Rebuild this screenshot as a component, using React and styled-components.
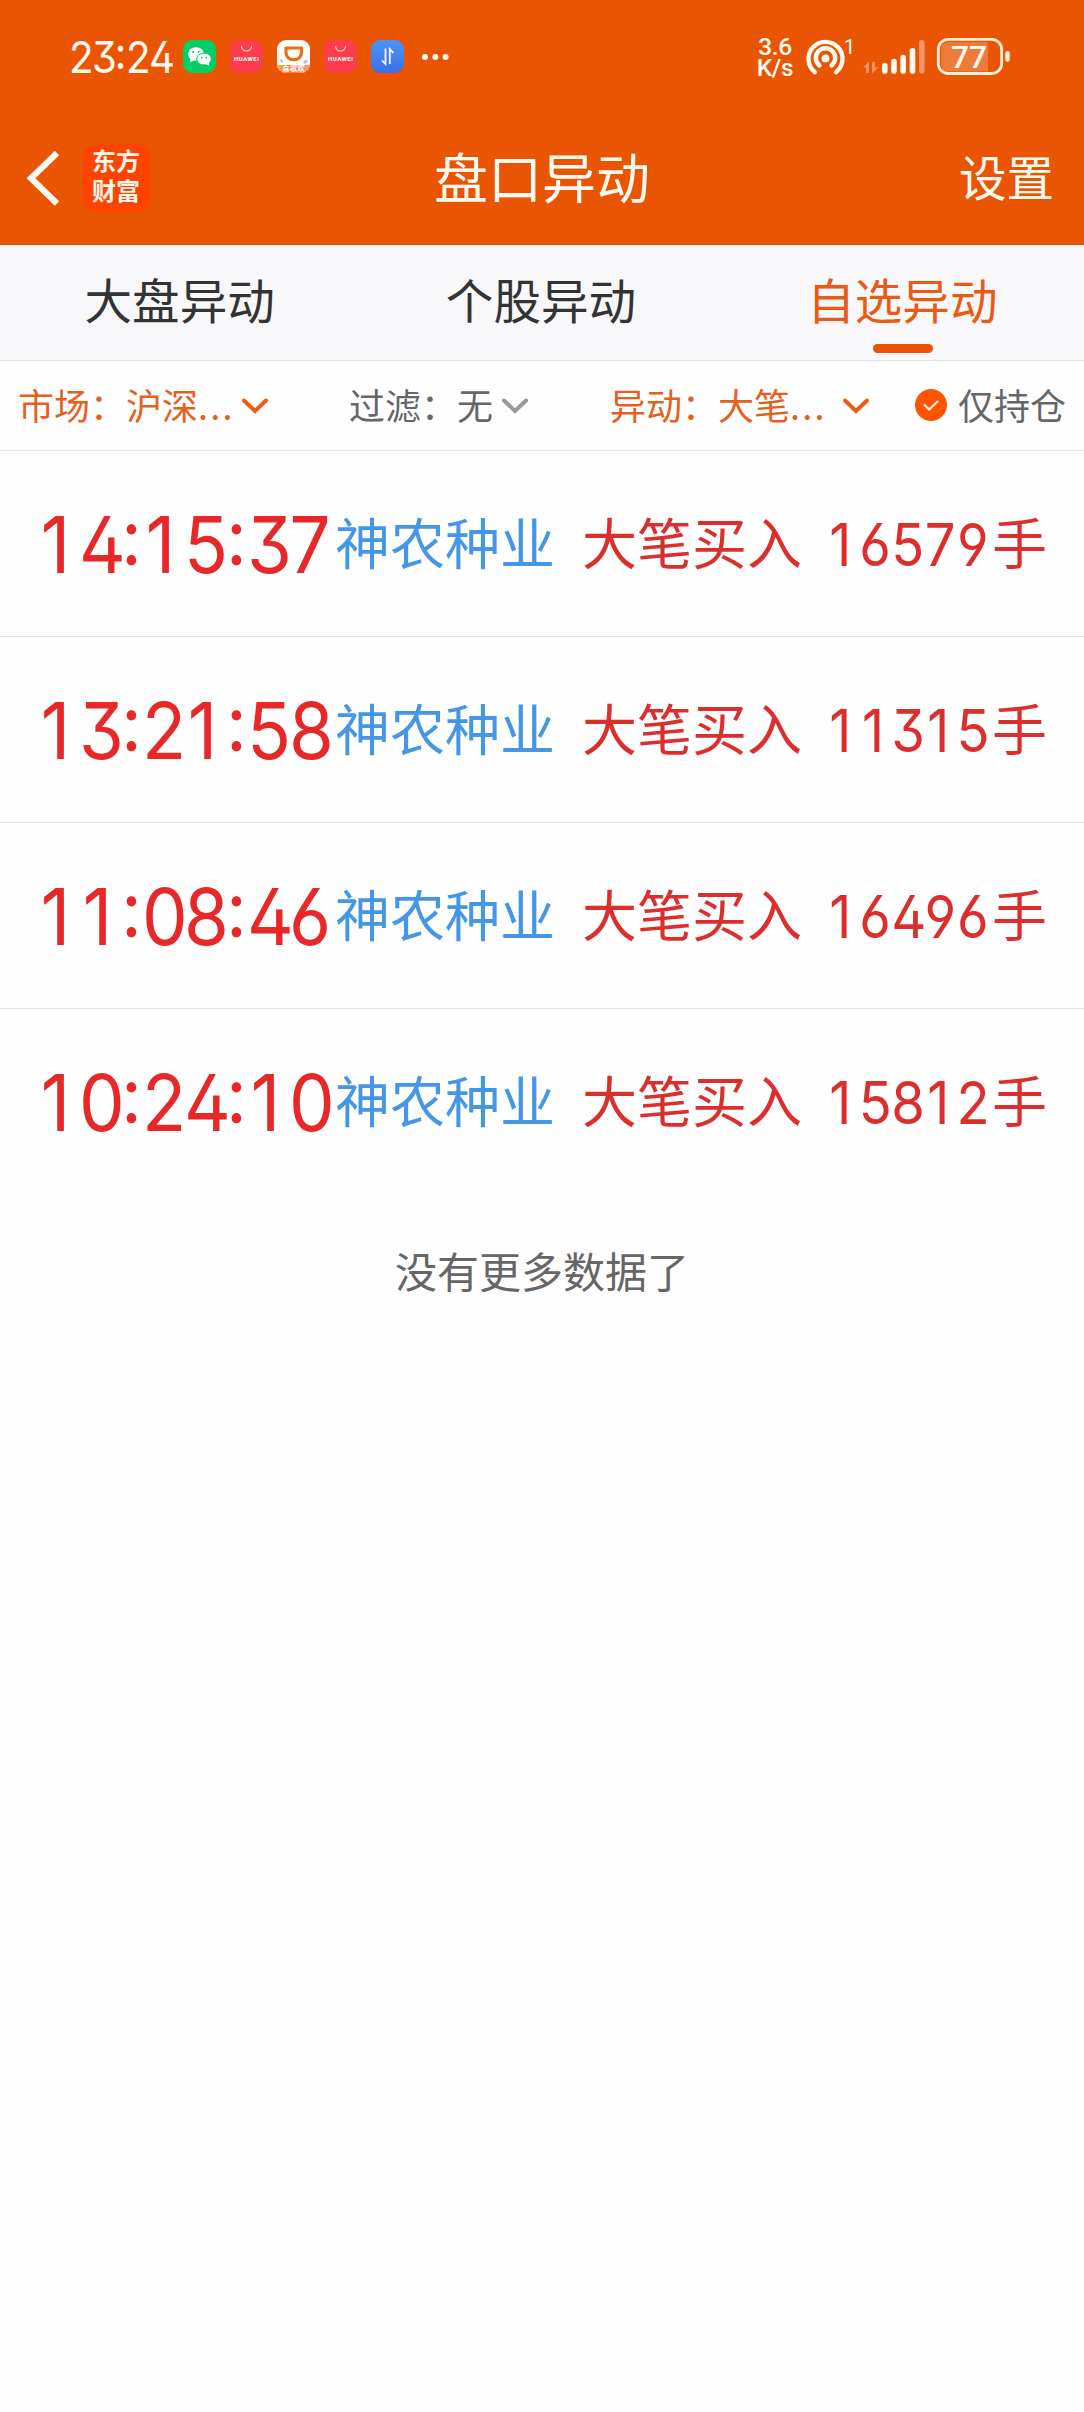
import React from "react";
import styled, { createGlobalStyle } from "styled-components";

const GlobalStyle = createGlobalStyle`
  * { box-sizing: border-box; }
  body {
    margin: 0;
    background: #fefefe;
    font-family: "Noto Sans CJK SC", sans-serif;
  }
`;

const latin = `Roboto, "Noto Sans CJK SC", sans-serif`;
const numeric = `Inter, Roboto, sans-serif`;

const Page = styled.main`
  width: 1084px;
  min-height: 2412px;
  display: flex;
  flex-direction: column;
  white-space: nowrap;
`;

const Header = styled.header`
  height: 245px;
  background: #ea5504;
  color: #fffaf0;
`;

const StatusBar = styled.div`
  height: 113px;
  padding: 0 74px 0 69px;
  display: flex;
  align-items: center;
  justify-content: space-between;
`;

const StatusGroup = styled.div`
  display: flex;
  align-items: center;
`;

const Digits = styled.span`
  display: block;
  transform: scaleX(0.93);
  transform-origin: 0 50%;
  font-family: ${numeric};
  font-feature-settings: "ss01", "case";
`;

const Cell = styled.span`
  display: inline-block;
  width: ${(p) => p.$width}em;
  padding-right: ${(p) => (p.$narrow ? 0.07 : 0)}em;
  text-align: center;
`;

const Clock = styled(Digits)`
  width: 114px;
  font-size: 43.5px;
  line-height: 60px;
`;

const AppIcons = styled.div`
  display: flex;
  gap: 14px;
  margin-right: 17px;
`;

const Speed = styled.div`
  width: 48px;
  margin-right: 4px;
  font: 500 24.5px/21px ${latin};
  text-align: center;
  letter-spacing: -0.4px;
`;

const NavBar = styled.nav`
  height: 132px;
  padding: 0 30px 5px 25px;
  display: grid;
  grid-template-columns: 1fr auto 1fr;
  align-items: center;
`;

const NavLeft = styled.div`
  display: flex;
  align-items: center;
  gap: 21px;
  padding-top: 2px;
`;

const BrandLogo = styled.div`
  width: 68px;
  height: 68px;
  border-radius: 14px;
  background: #ff4400;
  color: #fff6ec;
  display: flex;
  flex-direction: column;
  align-items: center;
  justify-content: center;
  font-size: 24px;
  font-weight: 700;
  line-height: 30px;
  padding: 0 2px 5px 0;
`;

const Title = styled.h1`
  margin: 0 0 0 5px;
  font-size: 54px;
  font-weight: 400;
  line-height: 74px;
  padding-bottom: 2px;
`;

const SettingsButton = styled.span`
  justify-self: end;
  font-size: 47.5px;
  line-height: 70px;
  padding-bottom: 2px;
`;

const Tabs = styled.div`
  height: 116px;
  display: grid;
  grid-template-columns: repeat(3, 1fr);
  background: #f8f8fa;
  border-bottom: 1px solid #dedee0;
`;

const Tab = styled.div`
  display: flex;
  flex-direction: column;
  align-items: center;
  padding: 18px 2px 0 0;
  font-size: 47.6px;
  line-height: 72px;
  color: ${(p) => (p.$active ? "#ea5a14" : "#333")};
`;

const Indicator = styled.i`
  width: 60px;
  height: 9px;
  margin: 9px 0 0 2px;
  border-radius: 5px;
  background: #ea5504;
`;

const Filters = styled.div`
  height: 90px;
  display: grid;
  grid-template-columns: 331px 261px 305px 1fr;
  padding-left: 18px;
  border-bottom: 1px solid #e4e4e4;
`;

const Filter = styled.div`
  display: flex;
  align-items: center;
  font-size: 36px;
  line-height: 50px;
  color: ${(p) => (p.$active ? "#e4601c" : "#666")};
  padding-bottom: 4px;
`;

const Dots = styled.span`
  letter-spacing: 2.2px;
  width: 40px;
`;

const ChevronBox = styled.span`
  display: flex;
  padding-top: 5px;
  margin-left: ${(p) => p.$gap}px;
`;

const CheckBox = styled.span`
  display: flex;
  padding-top: 3px;
  margin-right: 11px;
`;

const Row = styled.article`
  height: 186px;
  display: grid;
  grid-template-columns: 296px 247px 246px 1fr;
  align-items: center;
  padding: 0 0 8px 39px;
  border-bottom: 1px solid ${(p) => (p.$last ? "transparent" : "#e4e4e4")};
  color: #dc2e2d;
  font-size: 55px;
  line-height: 80px;
`;

const Time = styled(Digits)`
  margin: 10px 0 0 -2px;
  font-size: 78px;
  line-height: 80px;
  color: #e62828;
`;

const StockName = styled.span`
  color: #4497e6;
`;

const Volume = styled.span`
  display: flex;
  align-items: center;
`;

const Count = styled(Digits)`
  width: 166px;
  margin: 11px 0 0 -2px;
  font-size: 58.5px;
  line-height: 80px;
`;

const Footer = styled.p`
  margin: 45px 0 0;
  text-align: center;
  font-size: 42px;
  line-height: 60px;
  color: #666;
`;

const IconText = styled.text`
  font-family: Roboto, "Noto Sans CJK SC", sans-serif;
`;

function WeChatIcon() {
  return (
    <svg width="33" height="33" viewBox="0 0 33 33">
      <rect width="33" height="33" rx="9" fill="#05ce66" />
      <ellipse cx="13" cy="14" rx="8" ry="6.7" fill="#fff" />
      <path d="M7.5 18 L7 22.5 L11.5 20z" fill="#fff" />
      <ellipse cx="21" cy="19" rx="7.3" ry="6" fill="#fff" stroke="#05ce66" strokeWidth="1" />
      <path d="M22 24 L26 25.5 L25.7 22z" fill="#fff" />
      <g fill="#05ce66">
        <circle cx="10.3" cy="12" r="1.1" />
        <circle cx="15.6" cy="12" r="1.1" />
        <circle cx="18.7" cy="17.6" r="0.9" />
        <circle cx="23.2" cy="17.6" r="0.9" />
      </g>
    </svg>
  );
}

function HuaweiIcon() {
  return (
    <svg width="33" height="33" viewBox="0 0 33 33">
      <rect width="33" height="33" rx="9" fill="#fc3d4b" />
      <path d="M11.5 6 a5 5 0 0 0 10 0" fill="none" stroke="#ffe3e0" strokeWidth="1.1" />
      <IconText x="16.5" y="21" fontSize="6" fontWeight="700" textAnchor="middle" textLength="25" fill="#fff">
        HUAWEI
      </IconText>
    </svg>
  );
}

function CupIcon() {
  return (
    <svg width="33" height="33" viewBox="0 0 33 33">
      <defs>
        <clipPath id="cup-clip">
          <rect width="33" height="33" rx="9" />
        </clipPath>
        <linearGradient id="cup-ribbon">
          <stop offset="0" stopColor="#f6b04a" />
          <stop offset="0.4" stopColor="#f4743a" />
          <stop offset="1" stopColor="#f59a86" />
        </linearGradient>
      </defs>
      <g clipPath="url(#cup-clip)">
        <rect width="33" height="33" fill="#fffdf8" />
        <path d="M9 8h15.5v4.5a7.2 7.2 0 0 1-7.2 7.2h-1A7.2 7.2 0 0 1 9 12.5z" fill="none" stroke="#e8701c" strokeWidth="3.2" strokeLinejoin="round" />
        <path d="M0 25h33v8H0z" fill="url(#cup-ribbon)" />
        <path d="M26 22l3-2.5 2 1.5-3 3zM3 20l2-1 1 3-2 1z" fill="#c8b4ee" />
        <IconText x="16.5" y="31" fontSize="7.5" fontWeight="700" textAnchor="middle" fill="#fff">
          喜歌欢
        </IconText>
      </g>
    </svg>
  );
}

function TransferIcon() {
  return (
    <svg width="33" height="33" viewBox="0 0 33 33">
      <defs>
        <linearGradient id="transfer" x1="0" y1="0" x2="0" y2="1">
          <stop offset="0" stopColor="#4c94f5" />
          <stop offset="1" stopColor="#3a70e8" />
        </linearGradient>
      </defs>
      <rect width="33" height="33" rx="9" fill="url(#transfer)" />
      <path d="M14.5 8.5V24L11 20.5M18.8 24V9L22.5 13" fill="none" stroke="#fff" strokeWidth="1.7" />
    </svg>
  );
}

function MoreDots() {
  return (
    <svg width="28" height="8" viewBox="0 0 28 8" fill="#fffaf0">
      <circle cx="4" cy="4" r="3" />
      <circle cx="14.3" cy="4" r="3" />
      <circle cx="24.6" cy="4" r="3" />
    </svg>
  );
}

function SystemIcons() {
  return (
    <svg width="207" height="44" viewBox="803 34 207 44">
      <g fill="none" stroke="#fffaf0" strokeWidth="4.4" strokeLinecap="round">
        <path d="M815 71.2A17 17 0 1 1 836 71.2" />
        <path d="M819.5 64.5A9.7 9.7 0 1 1 831.5 64.5" />
      </g>
      <circle cx="825.5" cy="57.4" r="3.9" fill="#fffaf0" />
      <IconText x="844" y="53" fontSize="20" fill="#fffaf0">1</IconText>
      <g fill="#f59560">
        <path d="M863 66.5L869 60.5V72H866V66.5z" />
        <path d="M872 61H875V66.5H878.5L872 72.5z" />
        <rect x="919" y="39" width="5.6" height="33.5" rx="2.8" />
      </g>
      <g fill="#fffaf0">
        <rect x="882" y="61.7" width="5.6" height="11" rx="2.8" />
        <rect x="891.2" y="57.7" width="5.6" height="15" rx="2.8" />
        <rect x="900.4" y="53.7" width="5.6" height="19" rx="2.8" />
        <rect x="909.7" y="47" width="5.6" height="25.7" rx="2.8" />
      </g>
      <path d="M948 41h40v29.5h-40a7 7 0 0 1-7-7V48a7 7 0 0 1 7-7z" fill="#f07a3b" />
      <rect x="938.3" y="38.3" width="63.4" height="34.2" rx="10" fill="none" stroke="#fff0da" strokeWidth="2.8" />
      <rect x="1005.3" y="50" width="4.4" height="11" rx="2.2" fill="#fff0da" />
      <IconText x="969" y="67" fontSize="32" fontWeight="500" textAnchor="middle" textLength="36" lengthAdjust="spacingAndGlyphs" fill="#fffaf0">77</IconText>
    </svg>
  );
}

function BackIcon() {
  return (
    <svg width="37" height="60" viewBox="0 0 37 60">
      <path d="M32 5L6 30.3L32 55.5" fill="none" stroke="#fffaf0" strokeWidth="6.2" />
    </svg>
  );
}

function Chevron({ color }) {
  return (
    <svg width="28" height="18" viewBox="0 0 28 18">
      <path d="M3 3.5L14 14L25 3.5" fill="none" stroke={color} strokeWidth="4" strokeLinecap="round" />
    </svg>
  );
}

function CheckIcon() {
  return (
    <svg width="32" height="32" viewBox="0 0 32 32">
      <circle cx="16" cy="16" r="16" fill="#ff5500" />
      <path d="M9 15.5L14.2 20.5L23 12" fill="none" stroke="#fff3e6" strokeWidth="2.2" />
    </svg>
  );
}

/* Even-width digits; a colon takes half a digit. */
function Figures({ value, width }) {
  return [...value].map((char, i) => (
    <Cell key={i} $width={char === ":" ? width / 2 : width} $narrow={char === "1"}>
      {char}
    </Cell>
  ));
}

const tabs = ["大盘异动", "个股异动", "自选异动"];

const trades = [
  { time: "14:15:37", count: "16579" },
  { time: "13:21:58", count: "11315" },
  { time: "11:08:46", count: "16496" },
  { time: "10:24:10", count: "15812" },
];

export default function App() {
  return (
    <Page>
      <GlobalStyle />
      <Header>
        <StatusBar>
          <StatusGroup>
            <Clock><Figures value="23:24" width={0.565} /></Clock>
            <AppIcons>
              <WeChatIcon />
              <HuaweiIcon />
              <CupIcon />
              <HuaweiIcon />
              <TransferIcon />
            </AppIcons>
            <MoreDots />
          </StatusGroup>
          <StatusGroup>
            <Speed>3.6<br />K/s</Speed>
            <SystemIcons />
          </StatusGroup>
        </StatusBar>
        <NavBar>
          <NavLeft>
            <BackIcon />
            <BrandLogo>
              <span>东方</span>
              <span>财富</span>
            </BrandLogo>
          </NavLeft>
          <Title>盘口异动</Title>
          <SettingsButton>设置</SettingsButton>
        </NavBar>
      </Header>
      <Tabs>
        {tabs.map((label, i) => (
          <Tab key={label} $active={i === 2}>
            {label}
            {i === 2 && <Indicator />}
          </Tab>
        ))}
      </Tabs>
      <Filters>
        <Filter $active>
          市场：沪深<Dots>...</Dots>
          <ChevronBox $gap={3}><Chevron color="#f05a14" /></ChevronBox>
        </Filter>
        <Filter>
          过滤：无
          <ChevronBox $gap={8}><Chevron color="#999" /></ChevronBox>
        </Filter>
        <Filter $active>
          异动：大笔<Dots>...</Dots>
          <ChevronBox $gap={12}><Chevron color="#ea5a14" /></ChevronBox>
        </Filter>
        <Filter>
          <CheckBox><CheckIcon /></CheckBox>
          仅持仓
        </Filter>
      </Filters>
      {trades.map((t, i) => (
        <Row key={t.time} $last={i === trades.length - 1}>
          <Time as="time"><Figures value={t.time} width={0.579} /></Time>
          <StockName>神农种业</StockName>
          <span>大笔买入</span>
          <Volume><Count><Figures value={t.count} width={0.6} /></Count>手</Volume>
        </Row>
      ))}
      <Footer>没有更多数据了</Footer>
    </Page>
  );
}
